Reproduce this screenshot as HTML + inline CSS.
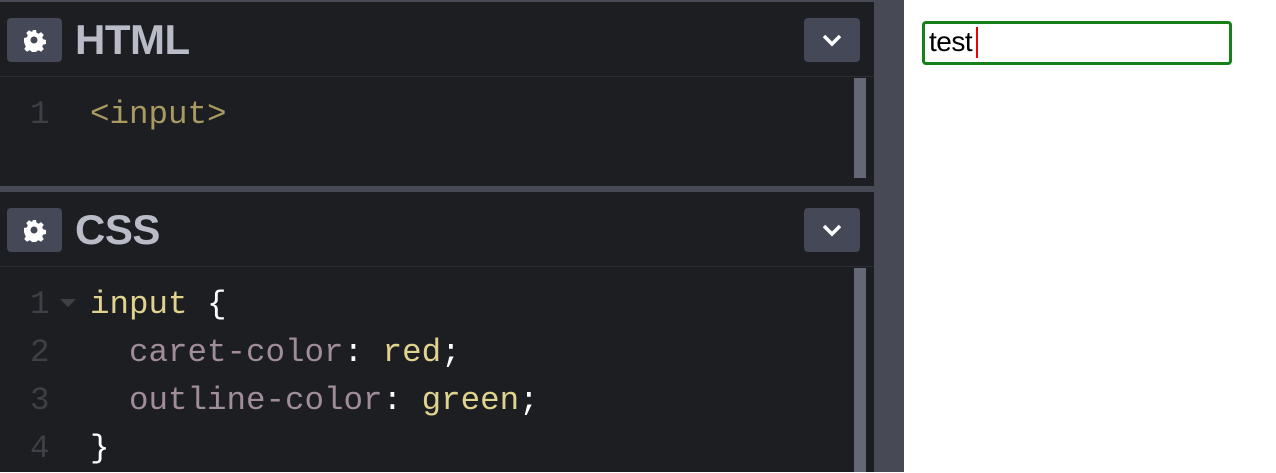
<!DOCTYPE html><html><head><style>
body{margin:0;width:1276px;height:472px;overflow:hidden;background:#fff;position:relative;font-family:"Liberation Sans",sans-serif}
.a{position:absolute}
.code{font-family:"Liberation Mono","DejaVu Sans Mono",monospace;font-size:32.5px;white-space:pre;line-height:48px}
.btn{background:#444857;border-radius:4px}
</style></head><body>
<div class="a" style="left:0;top:0;width:904px;height:472px;background:#474a54"></div>
<div class="a" style="left:0;top:2px;width:874px;height:184px;background:#1d1e22"></div>
<div class="a" style="left:0;top:76px;width:874px;height:1px;background:#2a2c31"></div>
<div class="a" style="left:0;top:192px;width:874px;height:280px;background:#1d1e22"></div>
<div class="a" style="left:0;top:266px;width:874px;height:1px;background:#2a2c31"></div>
<div class="a btn" style="left:7px;top:18px;width:55px;height:44px"></div>
<svg class="a" style="left:22px;top:28px" width="24" height="24" viewBox="0 0 24 24"><path fill="#fff" d="M10 2h4l.6 2.8 2 .9 2.4-1.6 2.8 2.8-1.6 2.4.9 2 2.9.7v4l-2.9.6-.9 2 1.6 2.4-2.8 2.8-2.4-1.6-2 .9-.6 2.9h-4l-.6-2.9-2-.9-2.4 1.6-2.8-2.8 1.6-2.4-.9-2L2 14v-4l2.9-.6.9-2-1.6-2.4 2.8-2.8 2.4 1.6 2-.9zM12 8.5a3.5 3.5 0 1 0 0 7 3.5 3.5 0 1 0 0-7z"/></svg>
<div class="a" style="left:75px;top:16px;font-size:42px;font-weight:bold;color:#b9bbc6;letter-spacing:-0.5px">HTML</div>
<div class="a btn" style="left:804px;top:18px;width:56px;height:44px"></div>
<svg class="a" style="left:820px;top:30px" width="24" height="20"><path d="M4 6l8 8 8-8" stroke="#fff" stroke-width="3.5" fill="none"/></svg>
<div class="a code" style="left:30px;top:91px;color:#3e4046">1</div>
<div class="a code" style="left:90px;top:91px;color:#a99a62">&lt;input&gt;</div>
<div class="a" style="left:854px;top:78px;width:12px;height:100px;background:#646876"></div>
<div class="a btn" style="left:7px;top:208px;width:55px;height:44px"></div>
<svg class="a" style="left:22px;top:218px" width="24" height="24" viewBox="0 0 24 24"><path fill="#fff" d="M10 2h4l.6 2.8 2 .9 2.4-1.6 2.8 2.8-1.6 2.4.9 2 2.9.7v4l-2.9.6-.9 2 1.6 2.4-2.8 2.8-2.4-1.6-2 .9-.6 2.9h-4l-.6-2.9-2-.9-2.4 1.6-2.8-2.8 1.6-2.4-.9-2L2 14v-4l2.9-.6.9-2-1.6-2.4 2.8-2.8 2.4 1.6 2-.9zM12 8.5a3.5 3.5 0 1 0 0 7 3.5 3.5 0 1 0 0-7z"/></svg>
<div class="a" style="left:75px;top:206px;font-size:42px;font-weight:bold;color:#b9bbc6;letter-spacing:-0.5px">CSS</div>
<div class="a btn" style="left:804px;top:208px;width:56px;height:44px"></div>
<svg class="a" style="left:820px;top:220px" width="24" height="20"><path d="M4 6l8 8 8-8" stroke="#fff" stroke-width="3.5" fill="none"/></svg>
<div class="a code" style="left:30px;top:281px;color:#3e4046">1
2
3
4</div>
<svg class="a" style="left:60px;top:299px" width="16" height="10"><path d="M0 0h16l-8 8z" fill="#3e4046"/></svg>
<div class="a code" style="left:90px;top:281px;color:#fff"><span style="color:#e0d38e">input</span> {
  <span style="color:#a08c9a">caret-color</span>: <span style="color:#e0d38e">red</span>;
  <span style="color:#a08c9a">outline-color</span>: <span style="color:#e0d38e">green</span>;
}</div>
<div class="a" style="left:854px;top:268px;width:12px;height:204px;background:#646876"></div>
<div class="a" style="left:922px;top:21px;width:304px;height:38px;border:3px solid #17801a;border-radius:4px;background:#fff"></div>
<div class="a" style="left:929px;top:26px;font-size:28px;letter-spacing:-0.5px;color:#000">test</div>
<div class="a" style="left:976px;top:27px;width:2px;height:31px;background:#e00"></div>
</body></html>
